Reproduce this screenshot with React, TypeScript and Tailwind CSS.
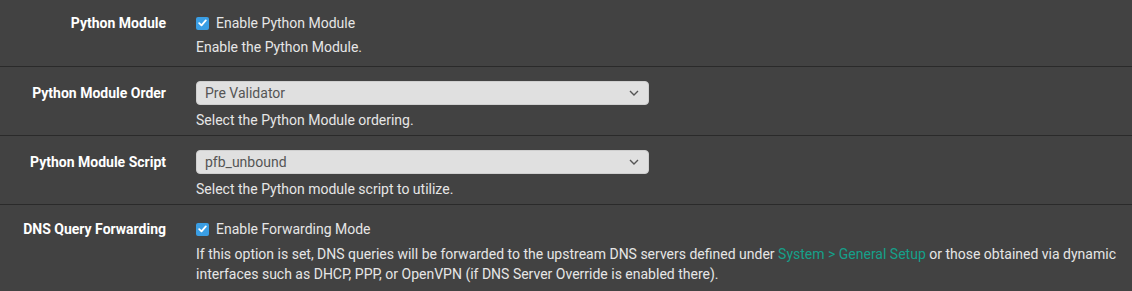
import React from "react";

function Check() {
  return (
    <span className="inline-flex h-[13px] w-[13px] items-center justify-center rounded-[2px] bg-[#3a9ee4]">
      <svg width="9" height="8" viewBox="0 0 9 8" fill="none">
        <path d="M1.2 4.2 L3.5 6.4 L7.8 1.4" stroke="white" strokeWidth="1.8" strokeLinecap="round" strokeLinejoin="round" />
      </svg>
    </span>
  );
}

function Select({ value }: { value: string }) {
  return (
    <div className="flex h-[24px] w-[453px] items-center justify-between rounded-[4px] border border-[#cfcfcf] bg-[#e0e0e0] pl-[8px] pr-[9px] text-[#555555]">
      <span>{value}</span>
      <svg width="10" height="6" viewBox="0 0 10 6" fill="none">
        <path d="M1 1 L5 5 L9 1" stroke="#555" strokeWidth="1.4" />
      </svg>
    </div>
  );
}

function Row({
  label,
  children,
  className,
  labelH,
}: {
  label: string;
  children: React.ReactNode;
  className: string;
  labelH: string;
}) {
  return (
    <div className={`flex border-b border-[#2a2a2a] ${className}`}>
      <div className={`flex w-[166px] shrink-0 items-center justify-end font-bold text-white ${labelH}`}>{label}</div>
      <div className="ml-[30px] flex flex-col">{children}</div>
    </div>
  );
}

export default function App() {
  return (
    <div
      className="h-[291px] w-[1132px] overflow-hidden bg-[#424242] text-[14px] leading-[20px] text-[#e6e6e6]"
      style={{ fontFamily: "Roboto, 'Liberation Sans', sans-serif" }}
    >
      <Row label="Python Module" className="pt-[13px] pb-[9px]" labelH="h-[20px]">
        <label className="flex h-[20px] items-center gap-[7px]">
          <Check />
          <span>Enable Python Module</span>
        </label>
        <div className="mt-[4px]">Enable the Python Module.</div>
      </Row>
      <Row label="Python Module Order" className="pt-[14px] pb-[5px]" labelH="h-[24px]">
        <Select value="Pre Validator" />
        <div className="mt-[5px]">Select the Python Module ordering.</div>
      </Row>
      <Row label="Python Module Script" className="pt-[14px] pb-[5px]" labelH="h-[24px]">
        <Select value="pfb_unbound" />
        <div className="mt-[5px]">Select the Python module script to utilize.</div>
      </Row>
      <div className="flex pt-[14px]">
        <div className="flex h-[20px] w-[166px] shrink-0 items-center justify-end font-bold text-white">DNS Query Forwarding</div>
        <div className="ml-[30px] flex flex-col pr-[10px]">
          <label className="flex h-[20px] items-center gap-[7px]">
            <Check />
            <span>Enable Forwarding Mode</span>
          </label>
          <div className="mt-[5px]">
            If this option is set, DNS queries will be forwarded to the upstream DNS servers defined under{" "}
            <span className="text-[#15a08a]">System &gt; General Setup</span> or those obtained via dynamic
            <br />
            interfaces such as DHCP, PPP, or OpenVPN (if DNS Server Override is enabled there).
          </div>
        </div>
      </div>
    </div>
  );
}
